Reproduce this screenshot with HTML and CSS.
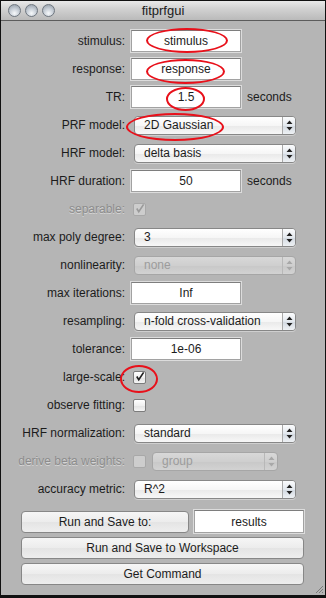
FILE: index.html
```
<!DOCTYPE html>
<html>
  <head>
    <title>fitprfgui</title>
    <link rel="stylesheet" href="styles.css">
  </head>
  <body>
    <div class="window">
      <div class="titlebar">
        <div class="lights">
          <span class="light"></span>
          <span class="light"></span>
          <span class="light"></span>
        </div>
        <div class="title">fitprfgui</div>
        <div></div>
      </div>

      <div class="content">
        <div class="row">
          <span class="lbl">stimulus:</span>
          <div class="ctl"><span class="field">stimulus</span></div>
        </div>
        <div class="row">
          <span class="lbl">response:</span>
          <div class="ctl"><span class="field">response</span></div>
        </div>
        <div class="row">
          <span class="lbl">TR:</span>
          <div class="ctl"><span class="field">1.5</span><span class="unit">seconds</span></div>
        </div>
        <div class="row">
          <span class="lbl">PRF model:</span>
          <div class="ctl"><div class="popup"><span class="val">2D Gaussian</span><span class="arrows"><svg width="7" height="11" viewBox="0 0 7 11"><path d="M3.5 0.5L6.5 4H0.5Z M3.5 10.5L6.5 7H0.5Z" fill="#222"/></svg></span></div></div>
        </div>
        <div class="row">
          <span class="lbl">HRF model:</span>
          <div class="ctl"><div class="popup"><span class="val">delta basis</span><span class="arrows"><svg width="7" height="11" viewBox="0 0 7 11"><path d="M3.5 0.5L6.5 4H0.5Z M3.5 10.5L6.5 7H0.5Z" fill="#222"/></svg></span></div></div>
        </div>
        <div class="row">
          <span class="lbl">HRF duration:</span>
          <div class="ctl"><span class="field">50</span><span class="unit">seconds</span></div>
        </div>
        <div class="row">
          <span class="lbl off">separable:</span>
          <div class="ctl"><span class="check off"><svg width="12" height="12" viewBox="0 0 12 12"><path d="M3 5.5L5.2 9L10.5 1" fill="none" stroke="#9a9a9a" stroke-width="1.8"/></svg></span></div>
        </div>
        <div class="row">
          <span class="lbl">max poly degree:</span>
          <div class="ctl"><div class="popup"><span class="val">3</span><span class="arrows"><svg width="7" height="11" viewBox="0 0 7 11"><path d="M3.5 0.5L6.5 4H0.5Z M3.5 10.5L6.5 7H0.5Z" fill="#222"/></svg></span></div></div>
        </div>
        <div class="row">
          <span class="lbl">nonlinearity:</span>
          <div class="ctl"><div class="popup off"><span class="val">none</span><span class="arrows"><svg width="7" height="11" viewBox="0 0 7 11"><path d="M3.5 0.5L6.5 4H0.5Z M3.5 10.5L6.5 7H0.5Z" fill="#a8a8a8"/></svg></span></div></div>
        </div>
        <div class="row">
          <span class="lbl">max iterations:</span>
          <div class="ctl"><span class="field">Inf</span></div>
        </div>
        <div class="row">
          <span class="lbl">resampling:</span>
          <div class="ctl"><div class="popup"><span class="val">n-fold cross-validation</span><span class="arrows"><svg width="7" height="11" viewBox="0 0 7 11"><path d="M3.5 0.5L6.5 4H0.5Z M3.5 10.5L6.5 7H0.5Z" fill="#222"/></svg></span></div></div>
        </div>
        <div class="row">
          <span class="lbl">tolerance:</span>
          <div class="ctl"><span class="field">1e-06</span></div>
        </div>
        <div class="row">
          <span class="lbl">large-scale:</span>
          <div class="ctl"><span class="check"><svg width="12" height="12" viewBox="0 0 12 12"><path d="M3 5.5L5.2 9L10.5 1" fill="none" stroke="#1e1e1e" stroke-width="1.8"/></svg></span></div>
        </div>
        <div class="row">
          <span class="lbl">observe fitting:</span>
          <div class="ctl"><span class="check"></span></div>
        </div>
        <div class="row">
          <span class="lbl">HRF normalization:</span>
          <div class="ctl"><div class="popup"><span class="val">standard</span><span class="arrows"><svg width="7" height="11" viewBox="0 0 7 11"><path d="M3.5 0.5L6.5 4H0.5Z M3.5 10.5L6.5 7H0.5Z" fill="#222"/></svg></span></div></div>
        </div>
        <div class="row">
          <span class="lbl off">derive beta weights:</span>
          <div class="ctl">
            <span class="check off"></span>
            <div class="popup off small"><span class="val">group</span><span class="arrows"><svg width="7" height="11" viewBox="0 0 7 11"><path d="M3.5 0.5L6.5 4H0.5Z M3.5 10.5L6.5 7H0.5Z" fill="#a8a8a8"/></svg></span></div>
          </div>
        </div>
        <div class="row">
          <span class="lbl">accuracy metric:</span>
          <div class="ctl"><div class="popup"><span class="val">R^2</span><span class="arrows"><svg width="7" height="11" viewBox="0 0 7 11"><path d="M3.5 0.5L6.5 4H0.5Z M3.5 10.5L6.5 7H0.5Z" fill="#222"/></svg></span></div></div>
        </div>

        <div class="actions">
          <div class="btn-line">
            <button class="btn save">Run and Save to:</button>
            <span class="field results">results</span>
          </div>
          <button class="btn">Run and Save to Workspace</button>
          <button class="btn">Get Command</button>
        </div>
      </div>

      <svg class="grip" width="10" height="10" viewBox="0 0 10 10">
        <path d="M9 2L2 9 M9 5L5 9 M9 8L8 9" stroke="#7a7a7a" stroke-width="1"/>
      </svg>

      <!-- red annotation rings drawn on top of the dialog -->
      <span class="ring ring-stim"></span>
      <span class="ring ring-resp"></span>
      <span class="ring ring-tr"></span>
      <span class="ring ring-prf"></span>
      <span class="ring ring-large"></span>
    </div>
  </body>
</html>
```

FILE: styles.css
```
* {
  box-sizing: border-box;
}

body {
  margin: 0;
  background: #000000;
  font-family: "Liberation Sans", Arial, sans-serif;
  font-size: 12px;
  color: #1c1c1c;
}

.window {
  position: relative;
  width: 326px;
  height: 598px;
  border: 1px solid #111111;
  border-bottom-width: 3px;
  background: #b5b5b5;
}

.titlebar {
  display: grid;
  grid-template-columns: 1fr auto 1fr;
  align-items: center;
  height: 20px;
  background: linear-gradient(#e9e9e9, #d2d2d2 40%, #bababa);
  border-bottom: 1px solid #5c5c5c;
}

.lights {
  display: flex;
  gap: 4px;
  padding-left: 7px;
}

.light {
  width: 13px;
  height: 13px;
  border-radius: 50%;
  border: 1px solid #6f7780;
  background: radial-gradient(circle at 50% 75%, #f7f9fb 0, #c9d0d8 45%, #8d97a2 100%);
}

.title {
  font-size: 13px;
  color: #202020;
}

.content {
  padding-top: 6px;
}

.row {
  display: grid;
  grid-template-columns: 124px 1fr;
  column-gap: 6px;
  align-items: center;
  height: 28px;
}

.lbl {
  text-align: right;
  white-space: nowrap;
}

.lbl.off {
  color: #8c8c8c;
  text-shadow: 0 1px 0 #d6d6d6;
}

.ctl {
  display: flex;
  align-items: center;
}

.field {
  display: flex;
  align-items: center;
  justify-content: center;
  width: 110px;
  height: 22px;
  background: #ffffff;
  border: 1px solid #a2a2a2;
  border-top-color: #7e7e7e;
  box-shadow: 0 0 0 1px #dcdcdc;
}

.unit {
  margin-left: 6px;
}

.popup {
  display: flex;
  align-items: stretch;
  width: 162px;
  height: 19px;
  margin-left: 3px;
  border: 1px solid #878787;
  border-radius: 4px;
  background: linear-gradient(#ffffff, #f6f6f6 50%, #e9e9e9 51%, #f7f7f7);
  box-shadow: 0 1px 0 rgba(255, 255, 255, 0.35);
  overflow: hidden;
}

.popup .val {
  flex: 1;
  display: flex;
  align-items: center;
  padding-left: 9px;
}

.arrows {
  display: flex;
  align-items: center;
  justify-content: center;
  width: 13px;
  border-left: 1px solid #a9a9a9;
  background: linear-gradient(#fbfcfd, #e3e8ee 50%, #d2d9e1 51%, #eef1f4);
}

.popup.off {
  border-color: #a6a6a6;
  background: linear-gradient(#d8d8d8, #cfcfcf 50%, #c8c8c8 51%, #d2d2d2);
  box-shadow: none;
}

.popup.off .val {
  color: #9c9c9c;
}

.popup.off .arrows {
  border-left-color: #b8b8b8;
  background: transparent;
}

.popup.small {
  width: 126px;
  margin-left: 6px;
}

.check {
  display: flex;
  align-items: center;
  justify-content: center;
  width: 13px;
  height: 13px;
  margin-left: 2px;
  border: 1px solid #7c7c7c;
  border-radius: 2px;
  background: linear-gradient(#ffffff, #f0f0f0 50%, #e2e2e2 51%, #f4f4f4);
}

.check.off {
  border-color: #a8a8a8;
  background: #cdcdcd;
}

.actions {
  display: flex;
  flex-direction: column;
  gap: 4px;
  margin-top: 7px;
  padding-left: 20px;
  width: 304px;
}

.btn-line {
  display: flex;
  align-items: center;
  gap: 5px;
}

.btn {
  height: 22px;
  width: 283px;
  border: 1px solid #878787;
  border-radius: 4px;
  background: linear-gradient(#f6f6f6, #ececec 50%, #e4e4e4 51%, #eeeeee);
  font-family: "Liberation Sans", Arial, sans-serif;
  font-size: 12px;
  color: #1c1c1c;
  padding: 0;
}

.btn.save {
  width: 168px;
}

.field.results {
  width: 110px;
  height: 23px;
}

.grip {
  position: absolute;
  right: 1px;
  bottom: 1px;
}

.ring {
  position: absolute;
  border: 2px solid #e8101a;
  border-radius: 50%;
}

.ring-stim {
  left: 145px;
  top: 27px;
  width: 82px;
  height: 25px;
}

.ring-resp {
  left: 145px;
  top: 58px;
  width: 79px;
  height: 25px;
}

.ring-tr {
  left: 165px;
  top: 86px;
  width: 39px;
  height: 24px;
}

.ring-prf {
  left: 125px;
  top: 112px;
  width: 98px;
  height: 28px;
}

.ring-large {
  left: 119px;
  top: 364px;
  width: 38px;
  height: 28px;
}
```
